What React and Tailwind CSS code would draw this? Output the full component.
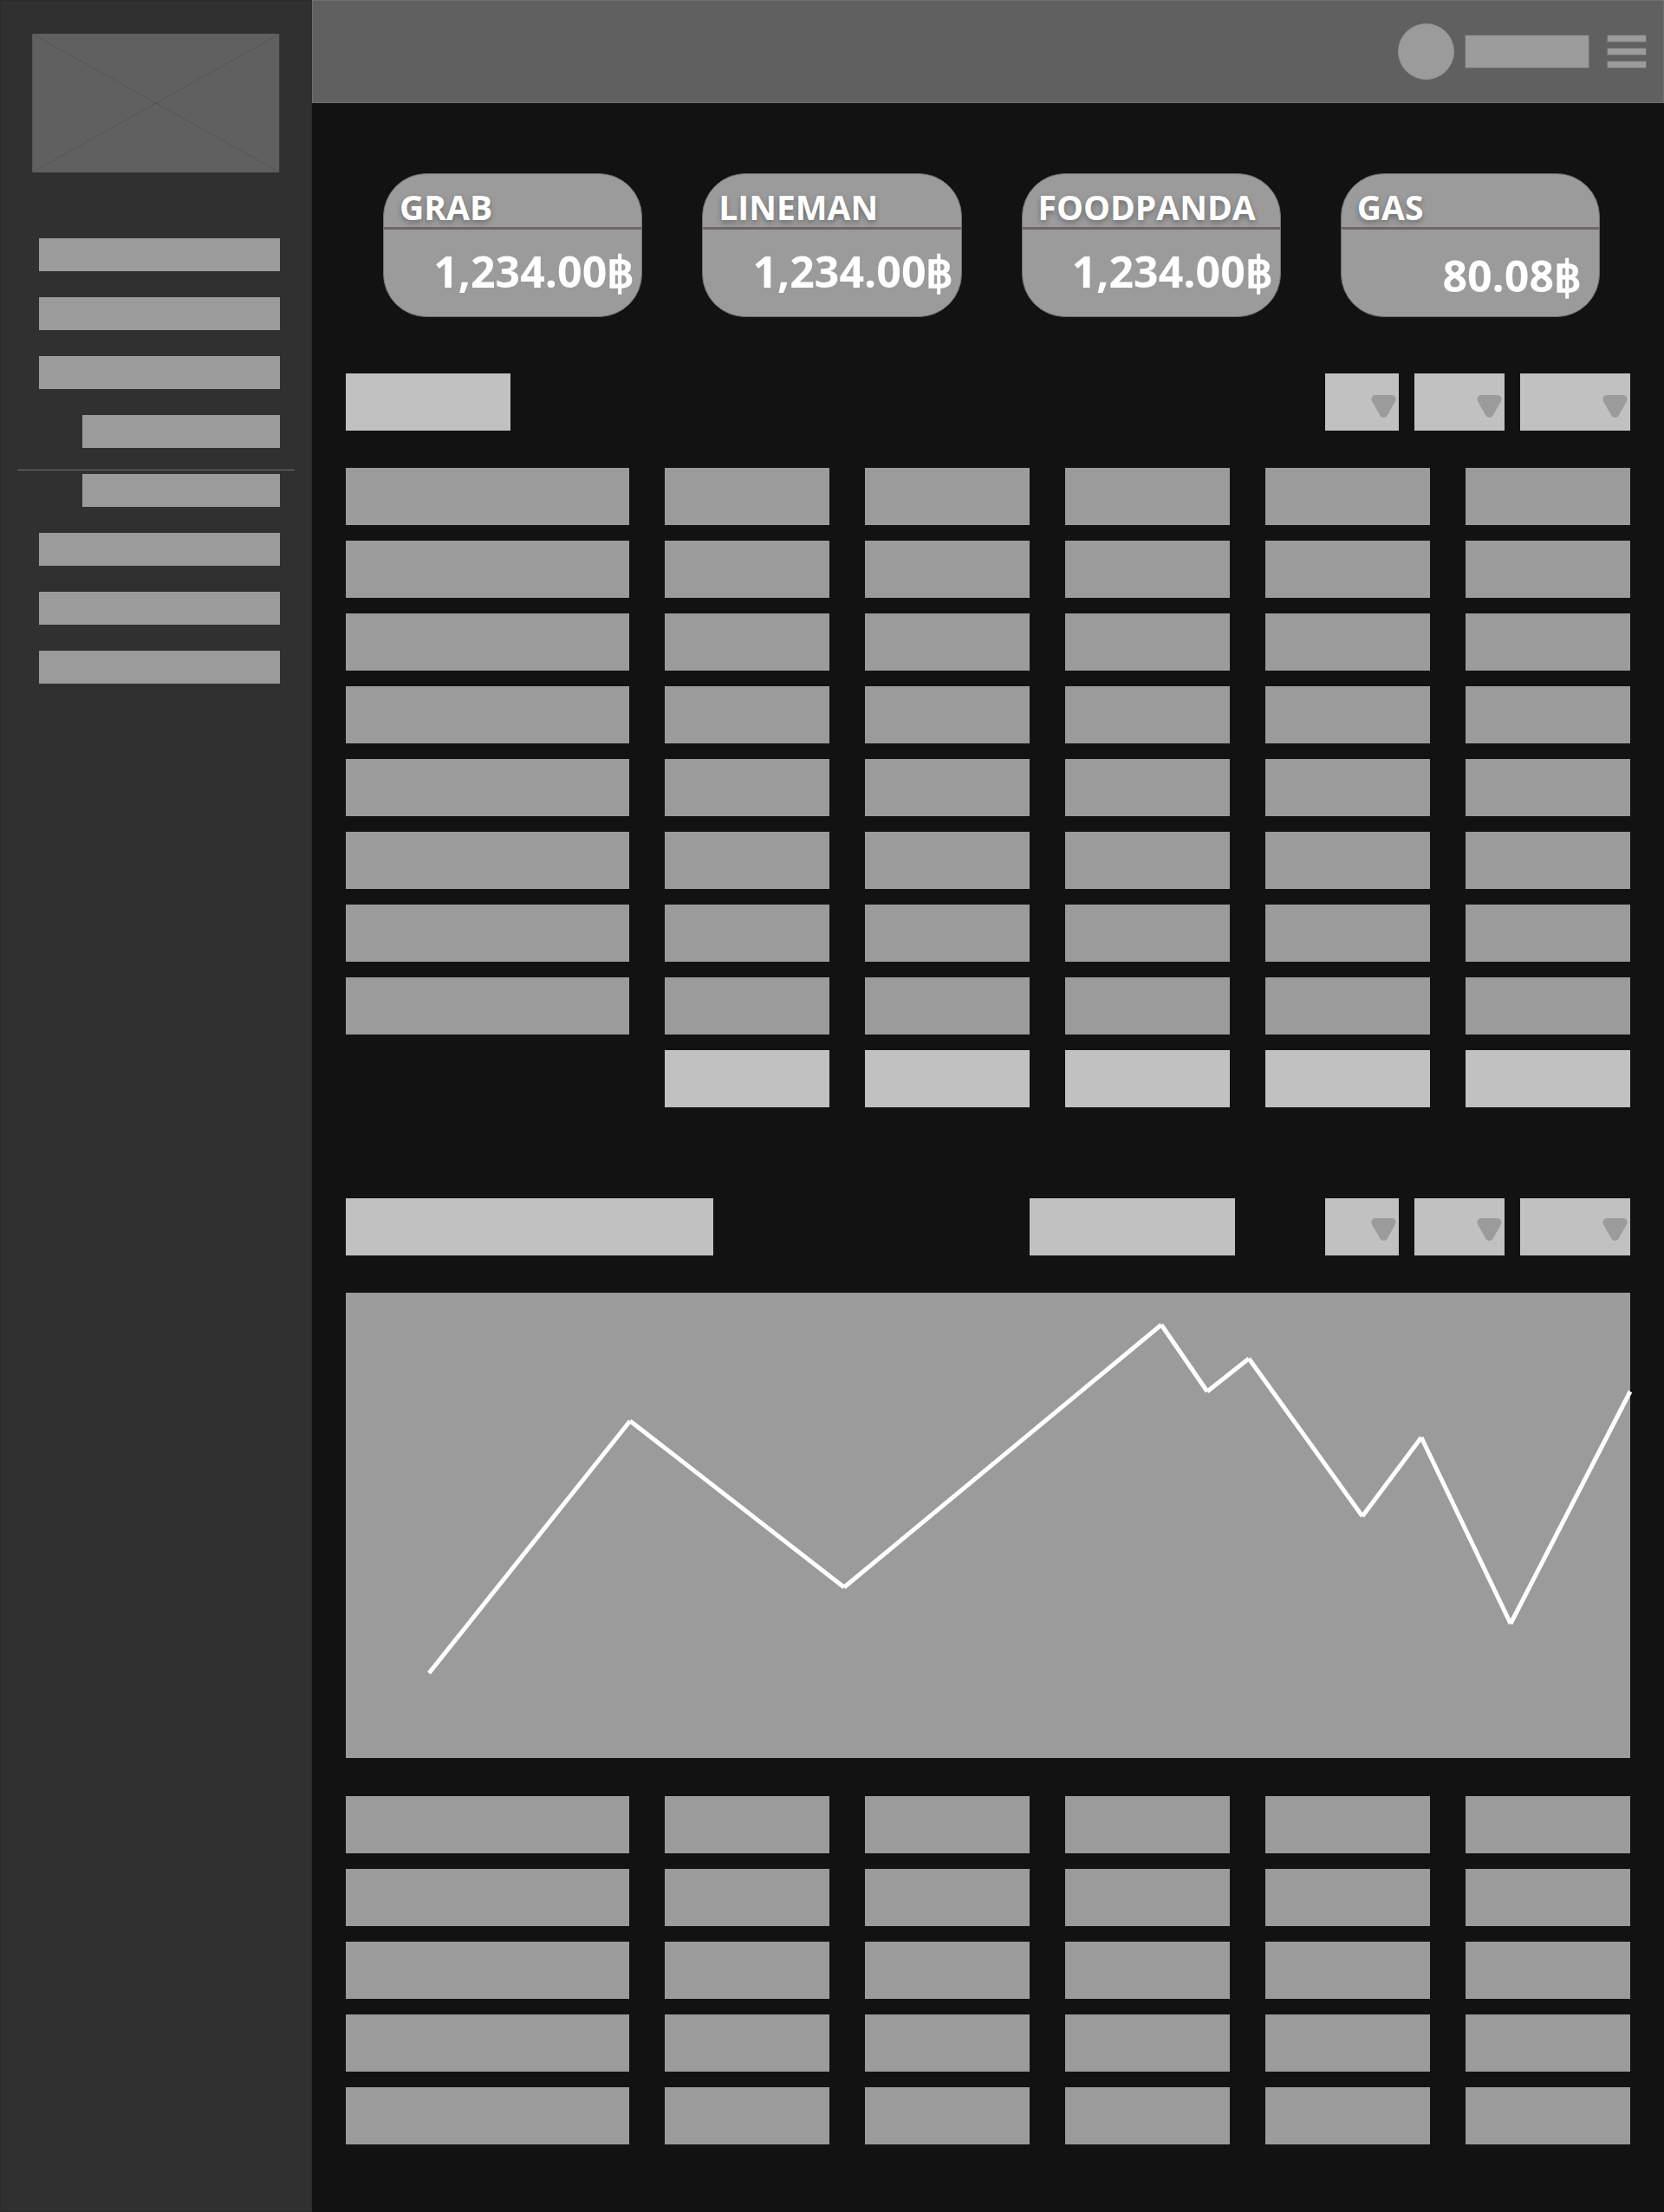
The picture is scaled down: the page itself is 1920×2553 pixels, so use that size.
const CARDS = [
  { name: "GRAB", amount: "1,234.00฿" },
  { name: "LINEMAN", amount: "1,234.00฿" },
  { name: "FOODPANDA", amount: "1,234.00฿" },
  { name: "GAS", amount: "80.08฿", inset: true },
];

const SERIES = [
  [96, 439],
  [328, 148],
  [575, 340],
  [941, 37],
  [994, 114],
  [1042, 76],
  [1173, 258],
  [1241, 167],
  [1344, 382],
  [1482, 114],
];

const TREND = SERIES.slice(1)
  .map(([x, y], i) => `M${SERIES[i][0]} ${SERIES[i][1]}L${x} ${y}`)
  .join("");

function NavItem({ label, nested }) {
  return (
    <a
      href="#"
      aria-label={label}
      className={nested ? "ml-[95px] mr-[37px] block h-[38px] bg-[#9b9b9b]" : "ml-[45px] mr-[37px] block h-[38px] bg-[#9b9b9b]"}
    />
  );
}

function Sidebar() {
  return (
    <aside className="w-[360px] shrink-0 border border-[#2b2b2b] bg-[#303030]">
      <div className="-mx-px">
        <svg
          viewBox="0 0 286 160"
          className="ml-[37px] mt-[38px] block h-[160px] w-[286px]"
          role="img"
          aria-label="Logo"
        >
          <rect width="286" height="160" fill="#606060" />
          <path d="M0.5 0V160" stroke="#555555" />
          <path d="M285.5 0V160" stroke="#3a3a3a" />
          <path d="M0 0L286 160M0 160L286 0" stroke="#000000" strokeOpacity="0.12" />
        </svg>
        <nav className="mt-[76px]" aria-label="Main">
          <div className="flex flex-col gap-[30px]">
            <NavItem label="Item 1" />
            <NavItem label="Item 2" />
            <NavItem label="Item 3" />
            <NavItem label="Item 3.1" nested />
          </div>
          <hr className="mx-5 mb-1 mt-[25px] h-px border-0 bg-[#707070]" />
          <div className="flex flex-col gap-[30px]">
            <NavItem label="Item 3.2" nested />
            <NavItem label="Item 4" />
            <NavItem label="Item 5" />
            <NavItem label="Item 6" />
          </div>
        </nav>
      </div>
    </aside>
  );
}

function Header() {
  return (
    <header className="flex h-[119px] items-center justify-end border border-[#707070] bg-[#606060] pr-[19px]">
      <div className="size-[65px] rounded-full border border-[#959595] bg-[#9b9b9b]" />
      <div className="ml-3 h-[39px] w-36 border border-[#707070] bg-[#9b9b9b]" />
      <button type="button" aria-label="Menu" className="ml-5 flex w-[46px] flex-col gap-1.5">
        <span className="h-[9px] border border-[#707070] bg-[#9b9b9b]" />
        <span className="h-[9px] border border-[#707070] bg-[#9b9b9b]" />
        <span className="h-[9px] border border-[#707070] bg-[#9b9b9b]" />
      </button>
    </header>
  );
}

function Card({ name, amount, inset }) {
  return (
    <article className="h-[166px] rounded-[50px] border border-[#707070] bg-[#9b9b9b] font-bold text-white">
      <h2 className="h-[61px] pl-[18px] pt-[9px] text-[39px] leading-[58px] [text-shadow:0_3px_6px_rgba(0,0,0,0.3)]">
        {name}
      </h2>
      <hr className="h-[3px] border-0 bg-[#6c6767]" />
      <p
        className={
          inset
            ? "pr-5 pt-[19px] text-right text-[50px] leading-[68px]"
            : "pr-2 pt-[14px] text-right text-[50px] leading-[68px]"
        }
      >
        {amount}
      </p>
    </article>
  );
}

function Dropdown({ label, width, arrow }) {
  return (
    <div className={`relative h-[66px] bg-[#c1c1c1] ${width}`}>
      <select aria-label={label} className="size-full appearance-none" defaultValue="">
        <option value="" />
      </select>
      <svg viewBox="0 0 29 27" className={`pointer-events-none absolute right-[3px] h-[27px] w-[29px] ${arrow}`}>
        <path
          d="M5.3 1H23.7C27.8 1 29.7 5 27.8 8.4L18.8 24.2C16.9 27.8 12.1 27.8 10.2 24.2L1.2 8.4C-.7 5 1.2 1 5.3 1Z"
          fill="#9b9b9b"
        />
      </svg>
    </div>
  );
}

function Filters({ arrow }) {
  return (
    <div className="flex gap-[18px]">
      <Dropdown label="Day" width="w-[85px]" arrow={arrow} />
      <Dropdown label="Month" width="w-[104px]" arrow={arrow} />
      <Dropdown label="Year" width="w-[127px]" arrow={arrow} />
    </div>
  );
}

const ROW = "grid grid-cols-[327fr_repeat(5,190fr)] gap-x-[41px]";

function Table({ label, rows, totals, className }) {
  return (
    <table aria-label={label} className={`block ${className}`}>
      <tbody className="flex flex-col gap-[18px]">
        {Array.from({ length: rows }, (_, r) => (
          <tr key={r} className={ROW}>
            {Array.from({ length: 6 }, (_, c) => (
              <td key={c} className="h-[66px] bg-[#9b9b9b] p-0" />
            ))}
          </tr>
        ))}
        {totals && (
          <tr className={ROW}>
            <td className="h-[66px] p-0" />
            {Array.from({ length: 5 }, (_, c) => (
              <td key={c} className="h-[66px] bg-[#c1c1c1] p-0" />
            ))}
          </tr>
        )}
      </tbody>
    </table>
  );
}

export default function App() {
  return (
    <div className="flex min-h-screen bg-[#121212] font-['Open_Sans','Noto_Sans',sans-serif]">
      <Sidebar />
      <div className="min-w-0 flex-1">
        <Header />
        <main className="px-[39px] pb-[78px] pt-[81px]">
          <section className="ml-[43px] mr-[35px] grid grid-cols-4 gap-[69px]">
            {CARDS.map((card) => (
              <Card key={card.name} {...card} />
            ))}
          </section>

          <section className="mt-[65px]">
            <div className="flex justify-between">
              <div className="h-[66px] w-[190px] bg-[#c1c1c1]" />
              <Filters arrow="top-6" />
            </div>
            <Table label="Sales" rows={8} totals className="mt-[43px]" />
          </section>

          <section className="mt-[105px]">
            <div className="flex">
              <div className="h-[66px] w-[424px] bg-[#c1c1c1]" />
              <div className="ml-auto mr-[104px] h-[66px] w-[237px] bg-[#c1c1c1]" />
              <Filters arrow="top-[22px]" />
            </div>
            <svg
              viewBox="0 0 1482 537"
              className="mt-[43px] block w-full overflow-visible bg-[#9b9b9b]"
              role="img"
              aria-label="Trend"
            >
              <path d={TREND} fill="none" stroke="#ffffff" strokeWidth="5" />
            </svg>
            <Table label="Trend details" rows={5} className="mt-11" />
          </section>
        </main>
      </div>
    </div>
  );
}
